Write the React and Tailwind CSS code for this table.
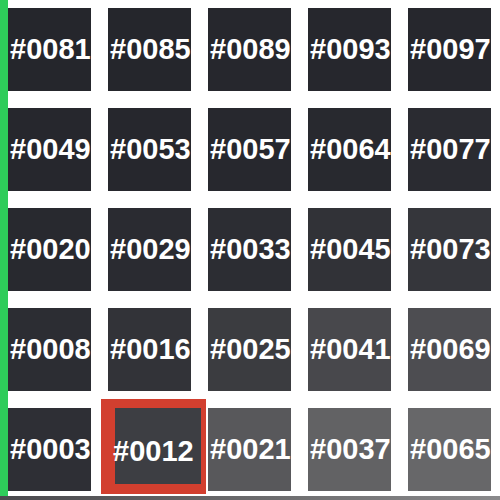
const rows = [
  [
    { id: "#0081", bg: "bg-[#25262c]" },
    { id: "#0085", bg: "bg-[#25262c]" },
    { id: "#0089", bg: "bg-[#26272d]" },
    { id: "#0093", bg: "bg-[#26272d]" },
    { id: "#0097", bg: "bg-[#26272d]" },
  ],
  [
    { id: "#0049", bg: "bg-[#26272d]" },
    { id: "#0053", bg: "bg-[#26272d]" },
    { id: "#0057", bg: "bg-[#27282e]" },
    { id: "#0064", bg: "bg-[#28292f]" },
    { id: "#0077", bg: "bg-[#2a2b31]" },
  ],
  [
    { id: "#0020", bg: "bg-[#28292f]" },
    { id: "#0029", bg: "bg-[#2a2b31]" },
    { id: "#0033", bg: "bg-[#2c2d33]" },
    { id: "#0045", bg: "bg-[#313237]" },
    { id: "#0073", bg: "bg-[#35363b]" },
  ],
  [
    { id: "#0008", bg: "bg-[#2c2d33]" },
    { id: "#0016", bg: "bg-[#323338]" },
    { id: "#0025", bg: "bg-[#3b3c40]" },
    { id: "#0041", bg: "bg-[#48484c]" },
    { id: "#0069", bg: "bg-[#4d4d51]" },
  ],
  [
    { id: "#0003", bg: "bg-[#2e2f35]" },
    { id: "#0012", bg: "bg-[#3d3e43]", selected: true },
    { id: "#0021", bg: "bg-[#58585b]" },
    { id: "#0037", bg: "bg-[#626264]" },
    { id: "#0065", bg: "bg-[#676769]" },
  ],
];

const Tile = ({ id, bg }) => (
  <div className={`w-[83px] h-[83px] ${bg} flex items-center pl-[2px] overflow-visible whitespace-nowrap`}>
    <span className="text-white font-bold text-[29px] leading-none">{id}</span>
  </div>
);

const App = () => {
  return (
    <div className="w-[500px] h-[500px] bg-white flex flex-col overflow-hidden font-['Liberation_Sans',Arial,sans-serif]">
      <div className="flex flex-1">
        <div className="w-[8px] bg-[#2ecc5a]" />
        <div className="flex flex-col gap-[17px] pt-[8px]">
          {rows.map((row, i) => (
            <div key={i} className="flex gap-[17px]">
              {row.map((t) =>
                t.selected ? (
                  <div key={t.id} className="w-[83px] h-[83px] relative">
                    <div className="absolute left-[-7px] top-[-9px] w-[105px] h-[95px] bg-[#d23f2f] pl-[14px] pr-[5px] pt-[9px] pb-[10px]">
                      <div className={`w-full h-full ${t.bg} flex items-center pt-[10px] overflow-visible whitespace-nowrap`}>
                        <span className="text-white font-bold text-[29px] leading-none -ml-[2px]">{t.id}</span>
                      </div>
                    </div>
                  </div>
                ) : (
                  <Tile key={t.id} id={t.id} bg={t.bg} />
                )
              )}
            </div>
          ))}
        </div>
      </div>
      <div className="h-[4px] bg-gradient-to-r from-[#4a4a4e] via-[#6a6a6c] to-[#8a8a8c]" />
    </div>
  );
};

export default App;
